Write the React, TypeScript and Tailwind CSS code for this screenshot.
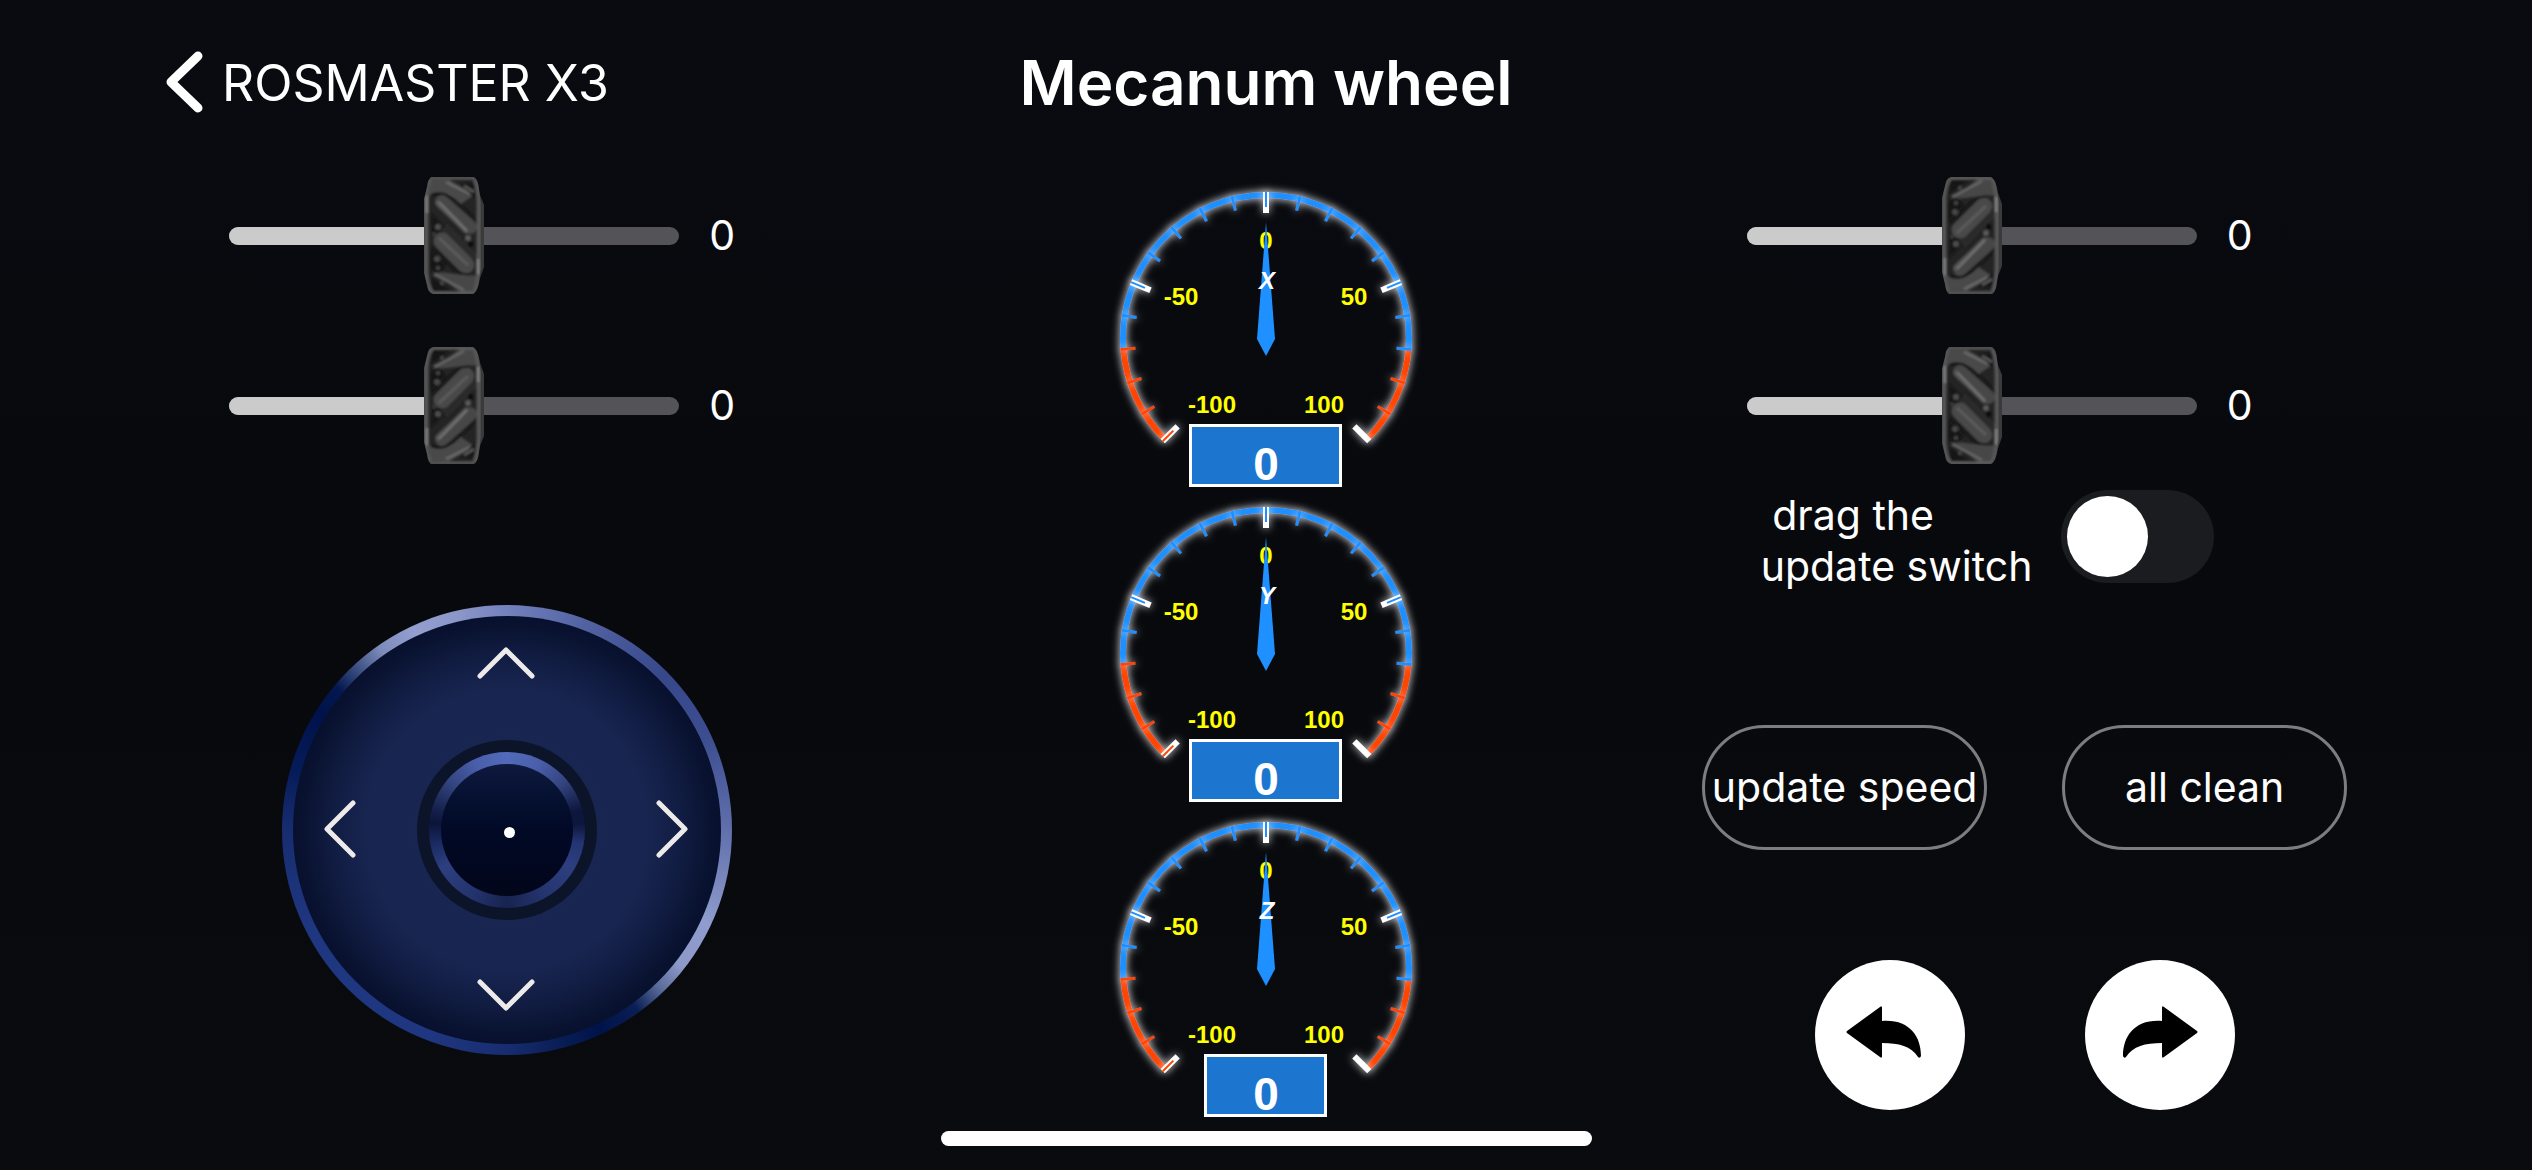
import { useState } from "react";

const SANS = "font-['Inter','Noto_Sans',sans-serif]";

function WheelThumb({ flipped }: { flipped: boolean }) {
  return (
    <svg viewBox="0 0 60 117" className={flipped ? "h-[117px] w-[60px] -scale-y-100" : "h-[117px] w-[60px]"} aria-hidden="true">
      <defs>
        <clipPath id="wheelBody">
          <path d="M7 0H50Q54 2 55 12L57 26V92L55 106Q53 115 49 117H9Q4 116 3 108L0 96V22L3 10Q4 2 7 0Z" />
        </clipPath>
        <filter id="wheelSoft" x="-5%" y="-5%" width="110%" height="110%">
          <feGaussianBlur stdDeviation="0.9" />
        </filter>
      </defs>
      <path d="M52 8L60 28V90L53 110Z" fill="#3a3a3b" />
      <g clipPath="url(#wheelBody)">
        <rect width="60" height="117" fill="#242424" />
        <g filter="url(#wheelSoft)">
          <path d="M2 26C5 14 12 16 20 17L37 27L50 18L26 3L6 3Z" fill="#4a4a4a" />
          <path d="M8 18C16 15 22 17 30 23L54 45" fill="none" stroke="#161616" strokeWidth="3" />
          <path d="M22 5L46 17" stroke="#666" strokeWidth="3" />
          <path d="M36 7L52 6V22Z" fill="#171717" />
          <path d="M40 9L50 15" stroke="#555" strokeWidth="3" />
          <path d="M18 25L46 50" stroke="#474747" strokeWidth="14" strokeLinecap="round" />
          <path d="M14 26L42 54" stroke="#555" strokeWidth="5" strokeLinecap="round" />
          <path d="M15 25L43 54" stroke="#737373" strokeWidth="2" />
          <path d="M7 36L24 54L8 58Z" fill="#151515" />
          <path d="M20 50L50 82" stroke="#2c2c2c" strokeWidth="10" />
          <path d="M18 64L42 88" stroke="#4a4a4a" strokeWidth="17" strokeLinecap="round" />
          <path d="M15 61L44 88" stroke="#5c5c5c" strokeWidth="3" />
          <path d="M9 70L36 97L46 98" fill="none" stroke="#161616" strokeWidth="3" />
          <path d="M6 72L22 88L14 97L6 92Z" fill="#141414" />
          <path d="M12 96C24 94 38 100 55 98V117H38Z" fill="#464646" />
          <path d="M10 97L40 113" stroke="#636363" strokeWidth="3" />
          <path d="M7 99L28 115H8Z" fill="#181818" />
          <circle cx="14" cy="50" r="3" fill="#4e4e4e" />
          <circle cx="10" cy="57" r="2" fill="#3c3c3c" />
          <circle cx="44" cy="61" r="3" fill="#5a5a5a" />
          <circle cx="47" cy="67" r="3" fill="#101010" />
          <circle cx="13" cy="82" r="3" fill="#484848" />
          <circle cx="14" cy="91" r="2" fill="#484848" />
          <circle cx="18" cy="106" r="2" fill="#4a4a4a" />
          <path d="M6 1H51" stroke="#5c5c5c" strokeWidth="3" />
          <path d="M8 116H50" stroke="#626262" strokeWidth="3" />
          <path d="M6 2Q2 10 2 20V96Q3 110 8 116" fill="none" stroke="#545454" strokeWidth="5" />
          <path d="M51 2Q55 12 55 26V92Q54 108 50 116" fill="none" stroke="#545454" strokeWidth="5" />
          <path d="M3 19V36" stroke="#7c7c7c" strokeWidth="3" />
          <path d="M54 82V97" stroke="#808080" strokeWidth="3" />
        </g>
      </g>
    </svg>
  );
}

function WheelSlider({ label, flipped }: { label: string; flipped: boolean }) {
  const [value, setValue] = useState(0);
  const percent = (value + 100) / 2;
  return (
    <div className="flex items-center gap-[30px]">
      <label className="relative flex h-[117px] w-[450px] items-center">
        <span className="flex h-[18px] w-full overflow-hidden rounded-full bg-[#545458]">
          <span className="bg-[#cbcbcb]" style={{ width: `${percent}%` }} />
        </span>
        <span className="absolute -translate-x-1/2" style={{ left: `${percent}%` }}>
          <WheelThumb flipped={flipped} />
        </span>
        <input
          type="range"
          min={-100}
          max={100}
          value={value}
          aria-label={label}
          onChange={(e) => setValue(Number(e.target.value))}
          className="absolute inset-0 h-full w-full cursor-pointer opacity-0"
        />
      </label>
      <output className="text-[41px] leading-[51px]">{value}</output>
    </div>
  );
}

function polar(r: number, deg: number) {
  const a = (deg * Math.PI) / 180;
  return `${(r * Math.sin(a)).toFixed(2)} ${(-r * Math.cos(a)).toFixed(2)}`;
}

const BLUE = "#1e90ff";
const ORANGE = "#ff4500";
const TICKS = Array.from({ length: 21 }, (_, i) => i);

function tickColor(i: number) {
  return i <= 3 || i > 17 ? ORANGE : BLUE;
}

function Gauge({ axis, narrow }: { axis: string; narrow?: boolean }) {
  return (
    <div className="grid h-[315px] w-[330px] justify-items-center">
      <svg viewBox="-165 -166 330 315" className="col-start-1 row-start-1 h-[315px] w-[330px] overflow-visible" role="img" aria-label={`${axis} speed gauge`}>
        <defs>
          <filter id={`glow${axis}`} filterUnits="userSpaceOnUse" x="-180" y="-180" width="360" height="330">
            <feDropShadow dx="0" dy="0" stdDeviation="4" floodColor="#fff" floodOpacity="1" />
          </filter>
          <filter id={`tickGlow${axis}`} filterUnits="userSpaceOnUse" x="-180" y="-180" width="360" height="330">
            <feDropShadow dx="0" dy="0" stdDeviation="4" floodColor="#fff" floodOpacity="0.8" />
          </filter>
        </defs>
        <g filter={`url(#glow${axis})`} fill="none" strokeWidth="6">
          <path d={`M${polar(143, -135)}A143 143 0 0 1 ${polar(143, -94.5)}`} stroke={ORANGE} />
          <path d={`M${polar(143, -94.5)}A143 143 0 1 1 ${polar(143, 94.5)}`} stroke={BLUE} />
          <path d={`M${polar(143, 94.5)}A143 143 0 0 1 ${polar(143, 135)}`} stroke={ORANGE} />
        </g>
        <g filter={`url(#tickGlow${axis})`}>
          {TICKS.map((i) =>
            i % 5 === 0 ? (
              <line key={i} y1="-146" y2="-125" stroke="#fff" strokeWidth="6" transform={`rotate(${i * 13.5 - 135})`} />
            ) : (
              <line key={i} y1="-146" y2="-131" stroke={tickColor(i)} strokeWidth="3" transform={`rotate(${i * 13.5 - 135})`} />
            ),
          )}
        </g>
        {TICKS.filter((i) => i < 20 && i % 5 === 0).map((i) => (
          <line key={i} y1="-146" y2="-131" stroke={tickColor(i)} strokeWidth="2" transform={`rotate(${i * 13.5 - 135})`} />
        ))}
        <g fill="#ff0" textAnchor="middle" className="font-['Liberation_Sans',sans-serif] text-[24px] font-bold">
          <text x="0" y="-89">0</text>
          <text x="-85" y="-33">-50</text>
          <text x="88" y="-33">50</text>
          <text x="-54" y="75">-100</text>
          <text x="58" y="75">100</text>
        </g>
        <path d="M0 -116L9 1L0 18L-9 1Z" fill={BLUE} />
        <text x="1" y="-49" fill="#fff" textAnchor="middle" className="font-['Liberation_Sans',sans-serif] text-[24px] font-bold italic">
          {axis}
        </text>
      </svg>
      <output
        className={`${narrow ? "w-[123px]" : "w-[153px]"} col-start-1 row-start-1 flex h-[63px] items-center justify-center self-end border-3 border-white bg-[#1c76d0] pt-4 font-['Liberation_Sans',sans-serif] text-[46px] leading-[46px] font-bold`}
      >
        0
      </output>
    </div>
  );
}

function PadArrow({ label, d, className }: { label: string; d: string; className: string }) {
  return (
    <button type="button" aria-label={label} className={`${className} flex items-center justify-center`}>
      <svg viewBox="0 0 60 60" className="h-[60px] w-[60px]" fill="none" stroke="#ecebe9" strokeWidth="5" strokeLinecap="round" strokeLinejoin="round">
        <path d={d} />
      </svg>
    </button>
  );
}

function Joystick() {
  return (
    <div className="h-[450px] w-[450px] rounded-full bg-[conic-gradient(#7381bd_0deg,#5363a2_20deg,#37488a_45deg,#3c4d90_65deg,#6170ac_90deg,#8f9ccd_115deg,#8c99c9_128deg,#5a6b9a_136deg,#0a1f55_144deg,#00124a_155deg,#0b2058_168deg,#182d70_180deg,#1f3680_200deg,#1f3680_245deg,#182d70_270deg,#061c5a_285deg,#00124a_302deg,#031850_310deg,#33477a_316deg,#7d8bbb_325deg,#949fd0_335deg,#8a96c8_348deg,#7381bd_360deg)] p-[11px]">
      <div className="grid h-full w-full grid-cols-[94px_1fr_94px] grid-rows-[94px_1fr_94px] rounded-full bg-[radial-gradient(circle_closest-side,#192652_0%,#182550_66%,#111c42_82%,#0a1433_93%,#07102d_100%)]">
        <PadArrow label="Forward" d="M3 43L29 17L55 43" className="col-start-2 row-start-1" />
        <PadArrow label="Left" d="M43 3L17 29L43 55" className="col-start-1 row-start-2" />
        <PadArrow label="Right" d="M15 3L41 29L15 55" className="col-start-3 row-start-2" />
        <PadArrow label="Backward" d="M3 15L29 41L55 15" className="col-start-2 row-start-3" />
        <div className="col-start-2 row-start-2 flex h-[180px] w-[180px] place-self-center rounded-full bg-[#0c1429] p-3">
          <button
            type="button"
            aria-label="Joystick"
            className="h-full w-full rounded-full bg-[conic-gradient(#526abb_0deg,#4a5fab_25deg,#34447f_50deg,#0d163c_75deg,#0d163c_85deg,#243472_100deg,#2d3f80_120deg,#24346e_150deg,#172350_180deg,#24346e_210deg,#2d3f80_240deg,#1a2960_260deg,#0b143a_275deg,#141f4a_285deg,#33447f_310deg,#4a5fab_335deg,#526abb_360deg)] p-3"
          >
            <span className="flex h-full w-full items-center justify-center rounded-full bg-linear-to-b from-[#0e193e] via-[#010926] to-[#02061a] pt-1 pl-1">
              <span className="h-[11px] w-[11px] rounded-full bg-white" />
            </span>
          </button>
        </div>
      </div>
    </div>
  );
}

function TurnButton({ label, mirrored }: { label: string; mirrored?: boolean }) {
  return (
    <button type="button" aria-label={label} className="h-[150px] w-[150px] rounded-full bg-white">
      <svg viewBox={mirrored ? "-6 0 150 150" : "0 0 150 150"} className={mirrored ? "h-full w-full -scale-x-100" : "h-full w-full"} fill="#000">
        <path d="M32 71L65 47Q67 45 67 48V61C94 59 106 76 106 96Q105 99 103 97C96 86 84 83 67 83V96Q67 99 65 97L32 73Q31 72 32 71Z" />
      </svg>
    </button>
  );
}

function PillButton({ children }: { children: string }) {
  return (
    <button type="button" className="h-[125px] w-[285px] rounded-full border-3 border-[#7d7d80] text-[41px] leading-[51px] whitespace-nowrap">
      {children}
    </button>
  );
}

export default function App() {
  const [dragUpdate, setDragUpdate] = useState(false);
  return (
    <div className={`${SANS} flex min-h-screen flex-col bg-[#090a0e] bg-linear-to-b from-[#0a0b10] via-[#08090d] to-[#0a0b0e] text-white`}>
      <header className="mb-2 grid h-[164px] grid-cols-3 items-center px-[128px]">
        <button type="button" className="ml-[36px] flex items-center gap-[18px] justify-self-start text-[50px] leading-[60px]">
          <svg viewBox="0 0 40 64" className="h-[64px] w-10" fill="none" stroke="#fff" strokeWidth="9" strokeLinecap="round" strokeLinejoin="round" aria-hidden="true">
            <path d="M34 6L7 32L34 58" />
          </svg>
          <span className="pt-[2px]">ROSMASTER X3</span>
        </button>
        <h1 className="pt-[2px] text-center text-[62px] leading-[76px] font-semibold whitespace-nowrap">Mecanum wheel</h1>
      </header>

      <main className="grid grid-cols-3 justify-items-center px-[128px]">
        <section className="flex flex-col items-center pt-[5px]">
          <div className="flex w-[556px] flex-col gap-[53px]">
            <WheelSlider label="Front left wheel" flipped={false} />
            <WheelSlider label="Rear left wheel" flipped />
          </div>
          <div className="mt-[141px]">
            <Joystick />
          </div>
        </section>

        <section className="flex flex-col">
          <Gauge axis="X" />
          <Gauge axis="Y" />
          <Gauge axis="Z" narrow />
        </section>

        <section className="flex flex-col items-center pt-[5px]">
          <div className="flex w-[556px] flex-col">
            <div className="flex flex-col gap-[53px]">
              <WheelSlider label="Front right wheel" flipped />
              <WheelSlider label="Rear right wheel" flipped={false} />
            </div>
            <label className="mt-4 flex cursor-pointer items-center gap-[30px] pl-[14px]">
              <span className="w-[270px] pt-[10px] text-[41px] leading-[51px] whitespace-pre">{" drag the\nupdate switch"}</span>
              <input type="checkbox" role="switch" checked={dragUpdate} onChange={(e) => setDragUpdate(e.target.checked)} className="peer sr-only" />
              <span className="flex h-[93px] w-[153px] items-center rounded-full bg-[#1b1c20] px-[6px] peer-checked:justify-end peer-checked:bg-green-500">
                <span className="h-[81px] w-[81px] rounded-full bg-white" />
              </span>
            </label>
          </div>
          <div className="mt-[133px] flex gap-[75px]">
            <PillButton>update speed</PillButton>
            <PillButton>all clean</PillButton>
          </div>
          <div className="mt-[110px] flex gap-[120px]">
            <TurnButton label="Turn left" />
            <TurnButton label="Turn right" mirrored />
          </div>
        </section>
      </main>

      <div className="mx-auto mt-[14px] mb-6 h-[15px] w-[651px] rounded-full bg-white" />
    </div>
  );
}
